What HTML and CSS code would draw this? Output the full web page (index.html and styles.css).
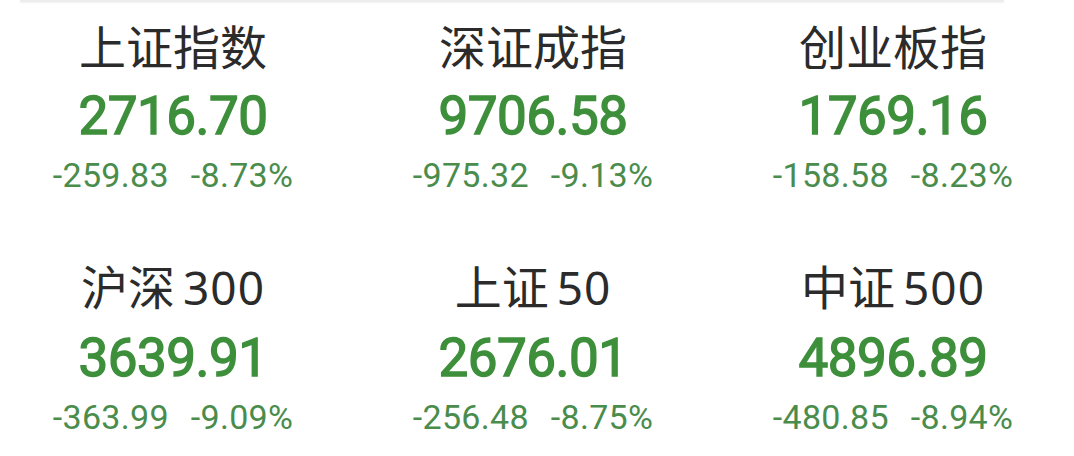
FILE: index.html
```html
<!DOCTYPE html>
<html lang="zh-CN">
<head>
    <meta charset="UTF-8">
    <title>大盘指数</title>
    <meta name="viewport" content="width=device-width, initial-scale=1.0">
    <link rel="stylesheet" href="styles.css">
</head>
<body>
    <div class="top-line"></div>
    <section class="board">
        <div class="index-card">
            <div class="name">上证指数</div>
            <div class="price">2716.70</div>
            <div class="change"><span>-259.83</span><span>-8.73%</span></div>
        </div>
        <div class="index-card">
            <div class="name">深证成指</div>
            <div class="price">9706.58</div>
            <div class="change"><span>-975.32</span><span>-9.13%</span></div>
        </div>
        <div class="index-card">
            <div class="name">创业板指</div>
            <div class="price">1769.16</div>
            <div class="change"><span>-158.58</span><span>-8.23%</span></div>
        </div>
        <div class="index-card">
            <div class="name">沪深<span class="num">300</span></div>
            <div class="price">3639.91</div>
            <div class="change"><span>-363.99</span><span>-9.09%</span></div>
        </div>
        <div class="index-card">
            <div class="name">上证<span class="num">50</span></div>
            <div class="price">2676.01</div>
            <div class="change"><span>-256.48</span><span>-8.75%</span></div>
        </div>
        <div class="index-card">
            <div class="name">中证<span class="num">500</span></div>
            <div class="price">4896.89</div>
            <div class="change"><span>-480.85</span><span>-8.94%</span></div>
        </div>
    </section>
</body>
</html>
```

FILE: styles.css
```css
body {
    margin: 0;
    background: #ffffff;
    overflow: hidden;
}
.top-line {
    height: 2px;
    margin: 0 70px 0 20px;
    background: #ececec;
    box-shadow: 0 1px 2px rgba(0, 0, 0, 0.06);
}
.board {
    display: grid;
    grid-template-columns: repeat(3, 360px);
    grid-template-rows: 240px auto;
    margin-left: -7px;
}
.index-card {
    display: flex;
    flex-direction: column;
    align-items: center;
    padding-top: 15px;
}
.name {
    font-family: "Noto Sans CJK SC", "Noto Sans", sans-serif;
    font-size: 47px;
    line-height: 56px;
    color: #2b2b2b;
}
.name .num {
    margin-left: 8px;
    font-family: "Noto Sans", sans-serif;
    font-size: 46px;
    letter-spacing: 1px;
}
.price {
    margin-top: 15px;
    font-family: Roboto, "Liberation Sans", sans-serif;
    font-weight: 400;
    font-size: 53px;
    line-height: 56px;
    letter-spacing: -0.5px;
    color: #3e8f3b;
    -webkit-text-stroke: 1.4px #3e8f3b;
}
.change {
    display: flex;
    gap: 22px;
    margin-top: 11px;
    font-family: Roboto, "Liberation Sans", sans-serif;
    font-size: 34px;
    line-height: 40px;
    letter-spacing: 0.3px;
    color: #4a8c4c;
}
```
